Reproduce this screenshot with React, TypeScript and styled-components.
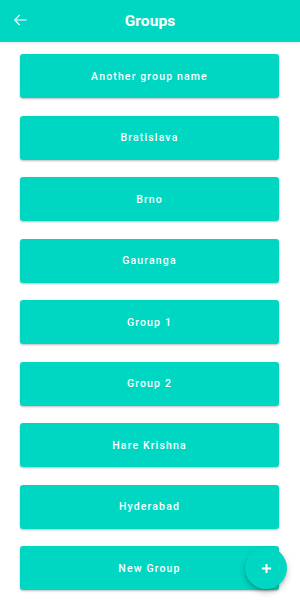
import React from "react";
import styled, { createGlobalStyle } from "styled-components";

const Global = createGlobalStyle`
  html, body { margin: 0; padding: 0; background: #ffffff; }
  body { font-family: Roboto, "Noto Sans", Arial, sans-serif; }
  * { box-sizing: border-box; }
`;

const TEAL = "#00d7c3";

const Page = styled.div`
  width: 300px;
  min-height: 600px;
  display: flex;
  flex-direction: column;
`;

const Header = styled.header`
  height: 42px;
  background: ${TEAL};
  display: grid;
  grid-template-columns: 42px 1fr 42px;
  align-items: center;
  box-shadow: 0 1px 3px rgba(0, 0, 0, 0.12);
`;

const BackButton = styled.button`
  border: 0;
  background: transparent;
  padding: 0;
  margin-left: 12px;
  width: 16px;
  height: 16px;
  display: flex;
  align-items: center;
  justify-content: center;
  color: #fff;
  margin-top: -3px;
`;

const Title = styled.h1`
  margin: 0;
  text-align: center;
  color: #fff;
  font-size: 15.5px;
  font-weight: 700;
  letter-spacing: 0.1px;
  margin-top: -1px;
`;

const List = styled.div`
  display: flex;
  flex-direction: column;
  gap: 17.5px;
  padding: 12px 21px 20px 20px;
`;

const GroupButton = styled.button`
  height: 44px;
  border: 0;
  border-radius: 3px;
  background: ${TEAL};
  color: #fff;
  font-family: Roboto, Arial, sans-serif;
  font-size: 10.5px;
  font-weight: 500;
  letter-spacing: 1.15px;
  box-shadow: 0 1px 2px rgba(0, 0, 0, 0.2), 0 1px 3px rgba(0, 0, 0, 0.08);
  cursor: pointer;
`;

const Fab = styled.button`
  position: fixed;
  left: 245px;
  top: 547px;
  width: 42px;
  height: 42px;
  border-radius: 50%;
  border: 0;
  background: ${TEAL};
  color: #fff;
  display: flex;
  align-items: center;
  justify-content: center;
  box-shadow: 0 3px 6px rgba(0, 0, 0, 0.22), 0 2px 3px rgba(0, 0, 0, 0.12);
  padding: 0;
`;

const groups = [
  "Another group name",
  "Bratislava",
  "Brno",
  "Gauranga",
  "Group 1",
  "Group 2",
  "Hare Krishna",
  "Hyderabad",
  "New Group",
];

export default function App() {
  return (
    <Page>
      <Global />
      <Header>
        <BackButton aria-label="back">
          <svg width="16" height="16" viewBox="0 0 24 24" fill="none">
            <path d="M21 12H4M11 5l-7 7 7 7" stroke="#fff" strokeWidth="1.7" strokeLinecap="square" />
          </svg>
        </BackButton>
        <Title>Groups</Title>
        <span />
      </Header>
      <List>
        {groups.map((g) => (
          <GroupButton key={g}>{g}</GroupButton>
        ))}
      </List>
      <Fab aria-label="add">
        <svg width="11" height="11" viewBox="0 0 12 12">
          <path d="M6 1v10M1 6h10" stroke="#fff" strokeWidth="2.2" />
        </svg>
      </Fab>
    </Page>
  );
}
